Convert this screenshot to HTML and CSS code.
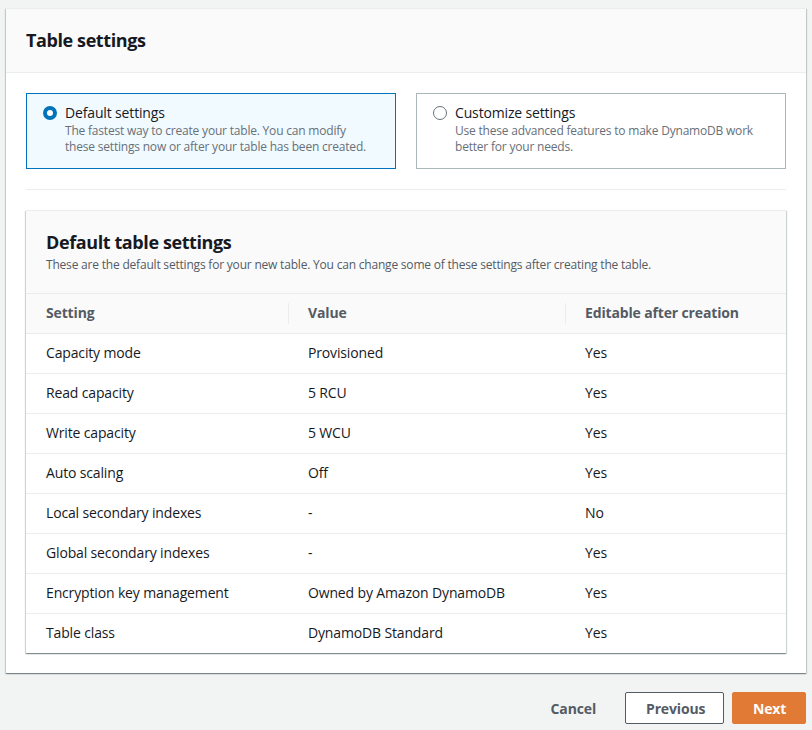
FILE: index.html
```html
<!DOCTYPE html>
<html>
<head>
<meta charset="utf-8">
<link rel="stylesheet" href="styles.css">
</head>
<body>
<div class="panel">
  <div class="panel-header"><h2 class="panel-title">Table settings</h2></div>
  <div class="panel-body">
    <div class="tiles">
      <div class="tile tile-selected">
        <div class="tile-top">
          <span class="radio radio-checked"></span>
          <span class="tile-label">Default settings</span>
        </div>
        <div class="tile-desc">The fastest way to create your table. You can modify these settings now or after your table has been created.</div>
      </div>
      <div class="tile">
        <div class="tile-top">
          <span class="radio"></span>
          <span class="tile-label">Customize settings</span>
        </div>
        <div class="tile-desc">Use these advanced features to make DynamoDB work better for your needs.</div>
      </div>
    </div>
    <div class="divider"></div>
    <div class="container">
      <div class="container-header">
        <h3 class="container-title">Default table settings</h3>
        <div class="container-desc">These are the default settings for your new table. You can change some of these settings after creating the table.</div>
      </div>
      <div class="table">
        <div class="row head">
          <div class="cell">Setting</div>
          <div class="cell sep">Value</div>
          <div class="cell sep">Editable after creation</div>
        </div>
        <div class="row"><div class="cell">Capacity mode</div><div class="cell">Provisioned</div><div class="cell">Yes</div></div>
        <div class="row"><div class="cell">Read capacity</div><div class="cell">5 RCU</div><div class="cell">Yes</div></div>
        <div class="row"><div class="cell">Write capacity</div><div class="cell">5 WCU</div><div class="cell">Yes</div></div>
        <div class="row"><div class="cell">Auto scaling</div><div class="cell">Off</div><div class="cell">Yes</div></div>
        <div class="row"><div class="cell">Local secondary indexes</div><div class="cell">-</div><div class="cell">No</div></div>
        <div class="row"><div class="cell">Global secondary indexes</div><div class="cell">-</div><div class="cell">Yes</div></div>
        <div class="row"><div class="cell">Encryption key management</div><div class="cell">Owned by Amazon DynamoDB</div><div class="cell">Yes</div></div>
        <div class="row"><div class="cell">Table class</div><div class="cell">DynamoDB Standard</div><div class="cell">Yes</div></div>
      </div>
    </div>
  </div>
</div>
<div class="actions">
  <button class="btn btn-link">Cancel</button>
  <button class="btn btn-normal">Previous</button>
  <button class="btn btn-primary">Next</button>
</div>
</body>
</html>
```

FILE: styles.css
```css
* { box-sizing: border-box; }
html, body { margin: 0; padding: 0; }
body {
  background: #f2f3f3;
  font-family: "Open Sans", "Noto Sans", sans-serif;
  color: #16191f;
  font-size: 14px;
  letter-spacing: -0.15px;
  width: 812px;
  height: 730px;
  overflow: hidden;
}
.panel {
  margin: 8px 6px 0 6px;
  background: #fff;
  box-shadow: 0 1px 1px 0 rgba(0,28,36,0.3), 1px 1px 1px 0 rgba(0,28,36,0.15), -1px 1px 1px 0 rgba(0,28,36,0.15);
  border-top: 1px solid #eaeded;
}
.panel-header {
  background: #fafafa;
  border-bottom: 1px solid #eaeded;
  height: 64px;
  display: flex;
  align-items: center;
  padding: 0 20px 2px 20px;
}
.panel-title {
  margin: 0;
  font-size: 18px;
  font-weight: 700;
  line-height: 22px;
  letter-spacing: -0.4px;
}
.panel-body {
  padding: 20px 20px 20px 20px;
}
.tiles {
  display: flex;
  gap: 20px;
}
.tile {
  flex: 1;
  border: 1px solid #aab7b8;
  padding: 9px 16px 13px 16px;
  height: 76px;
}
.tile-selected {
  background: #f1faff;
  border-color: #0073bb;
}
.tile-top {
  display: flex;
  align-items: center;
  height: 20px;
}
.radio {
  width: 14px;
  height: 14px;
  border-radius: 50%;
  border: 1px solid #687078;
  background: #fff;
  margin-right: 8px;
  flex: none;
}
.radio-checked {
  border: 4px solid #0073bb;
}
.tile-label {
  font-size: 14px;
  line-height: 20px;
}
.tile-desc {
  margin-left: 22px;
  max-width: 302px;
  font-size: 12px;
  line-height: 16px;
  color: #687078;
  letter-spacing: -0.2px;
}
.divider {
  height: 1px;
  background: #eaeded;
  margin: 20px 0 20px 0;
}
.container {
  border-top: 1px solid #eaeded;
  box-shadow: 0 1px 1px 0 rgba(0,28,36,0.3), 1px 1px 1px 0 rgba(0,28,36,0.15), -1px 1px 1px 0 rgba(0,28,36,0.15);
  background: #fff;
}
.container-header {
  background: #fafafa;
  padding: 20px 20px 20px 20px;
  border-bottom: 1px solid #eaeded;
}
.container-title {
  margin: 0;
  font-size: 18px;
  line-height: 22px;
  font-weight: 700;
  letter-spacing: -0.4px;
}
.container-desc {
  margin-top: 4px;
  font-size: 12px;
  line-height: 16px;
  color: #545b64;
  letter-spacing: -0.2px;
}
.row {
  display: grid;
  grid-template-columns: 262px 277px 1fr;
  height: 40px;
  align-items: center;
  border-top: 1px solid #eaeded;
}
.row:first-child { border-top: none; height: 39px; }
.row.head {
  background: #fafafa;
  font-weight: 700;
  color: #545b64;
}
.cell {
  padding-left: 20px;
  line-height: 20px;
  padding-bottom: 1px;
}
.cell.sep {
  border-left: 1px solid #eaeded;
  padding-left: 19px;
}
.actions {
  display: flex;
  justify-content: flex-end;
  align-items: center;
  gap: 8px;
  margin: 19px 6px 0 0;
}
.btn {
  font-family: inherit;
  font-size: 14px;
  font-weight: 700;
  letter-spacing: -0.15px;
  height: 32px;
  border-radius: 2px;
  padding: 0 20px;
  cursor: pointer;
}
.btn-link {
  background: none;
  border: 1px solid transparent;
  color: #545b64;
}
.btn-normal {
  background: #fff;
  border: 1px solid #545b64;
  color: #545b64;
  width: 99px;
}
.btn-primary {
  background: #e07a35;
  border: 1px solid #e07a35;
  color: #fff;
  width: 74px;
}
```
